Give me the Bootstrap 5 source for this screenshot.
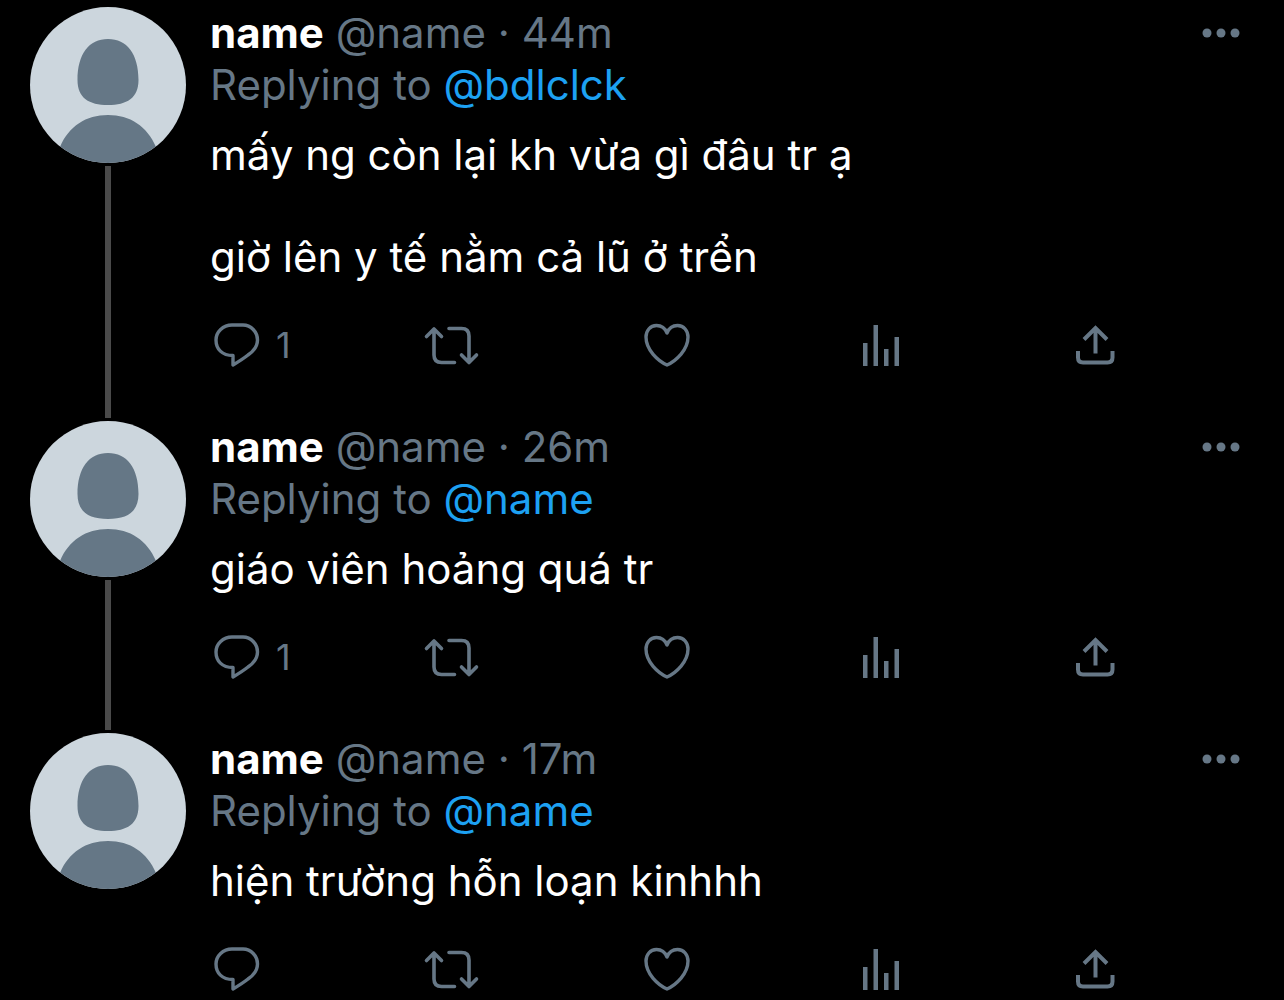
<!DOCTYPE html>
<html lang="vi">
<head>
<meta charset="utf-8">
<meta name="viewport" content="width=device-width, initial-scale=1">
<title>Thread</title>
<link href="https://cdn.jsdelivr.net/npm/bootstrap@5.3.0/dist/css/bootstrap.min.css" rel="stylesheet">
<style>
  body { background: #000; color: #fff; font-family: Inter, "Noto Sans", sans-serif; font-size: 42px; }
  .thread { padding: 4px 0 0 30px; }
  .tweet { gap: 24px; }
  .rail { width: 156px; padding-top: 3px; gap: 3px; }
  .rail-line { width: 6px; background: #4a4a4a; }
  .avatar { width: 156px; height: 156px; background: #ccd6dd; }
  .tweet-main { min-width: 0; padding: 3px 0 49px; }
  .tweet:last-child .tweet-main { padding-bottom: 0; }
  .tweet-head { line-height: 52px; padding-right: 44px; }
  .dim { color: #667786; }
  .mention { color: #1da1f2; }
  .tweet-text { line-height: 51px; margin: 18px 0 39px; white-space: pre-line; }
  .act { color: #667786; gap: 12px; font-size: 36px; line-height: 48px; }
  .act svg { width: 54px; height: 48px; overflow: visible; }
  .more { color: #667786; line-height: 0; }
  .more svg { width: 38px; height: 12px; }
  .ln { fill: none; stroke: currentColor; stroke-linecap: round; stroke-linejoin: round; }
</style>
<script src="https://cdn.jsdelivr.net/npm/bootstrap@5.3.0/dist/js/bootstrap.bundle.min.js"></script>
</head>
<body>
<svg class="d-none" aria-hidden="true">
  <symbol id="person" viewBox="0 0 156 156">
    <path fill="#657786" d="M78 32C97 32 108.500 47 108.500 73C108.500 91 97 98 78 98C59 98 47.500 91 47.500 73C47.500 47 59 32 78 32ZM78 108C100 108 117 119 126 140V156H30V140C39 119 56 108 78 108Z"/>
  </symbol>
  <symbol id="reply" viewBox="0 0 54 48" overflow="visible"><path class="ln" stroke-width="3.400" d="M22 4H33C41 4 47.500 11 47.500 19C47.500 25 44 30 38 34C33 38 28 41 23 44V34.500C12 34.500 6 28 6 19C6 11 13 4 22 4Z"/></symbol>
  <symbol id="retweet" viewBox="0 0 54 48" overflow="visible"><path class="ln" stroke-width="3.600" d="M1.500 15.500 9 8 16.500 15.500M9 8V34Q9 41.500 16.500 41.500H29.500M24 7.500H36.500Q44 7.500 44 15V41M36.500 34 44 41.500 51.500 34"/></symbol>
  <symbol id="heart" viewBox="0 0 54 48" overflow="visible"><path class="ln" stroke-width="3.400" d="M27 12C25 7 21 4.500 16.500 4.500C10 4.500 6 10 6 16C6 29 18 40 27 44C36 40 48 29 48 16C48 10 44 4.500 37.500 4.500C33 4.500 29 7 27 12Z"/></symbol>
  <symbol id="stats" viewBox="0 0 54 48" overflow="visible"><path fill="currentColor" d="M9 22h4.500v23H9zM19.500 4h4.500v41h-4.500zM30 28h4.500v17H30zM40.500 16H45v29h-4.500z"/></symbol>
  <symbol id="share" viewBox="0 0 54 48" overflow="visible"><path fill="none" stroke="currentColor" stroke-width="4" d="M26.500 32.500V7M15 18.500 26.500 7 38 18.500M9 30V36.500Q9 41.500 14 41.500H38.500Q43.500 41.500 43.500 36.500V30"/></symbol>
  <symbol id="dots" viewBox="0 0 38 12"><g fill="currentColor"><circle cx="5" cy="6" r="4.500"/><circle cx="19" cy="6" r="4.500"/><circle cx="33" cy="6" r="4.500"/></g></symbol>
</svg>
<main class="thread">
  <article class="tweet d-flex">
    <div class="rail d-flex flex-column align-items-center flex-shrink-0">
      <svg class="avatar rounded-circle flex-shrink-0"><use href="#person"/></svg>
      <div class="rail-line flex-grow-1"></div>
    </div>
    <div class="tweet-main flex-grow-1">
      <header class="tweet-head">
        <div class="d-flex justify-content-between align-items-center">
          <div><strong>name</strong> <span class="dim">@name · 44m</span></div>
          <button type="button" class="more btn p-0 border-0" aria-label="More"><svg><use href="#dots"/></svg></button>
        </div>
        <div class="dim">Replying to <a href="#" class="mention text-decoration-none">@bdlclck</a></div>
      </header>
      <p class="tweet-text">mấy ng còn lại kh vừa gì đâu tr ạ

giờ lên y tế nằm cả lũ ở trển</p>
      <div class="row row-cols-5 g-0">
        <div class="col"><button type="button" class="act btn p-0 border-0 d-flex" aria-label="Reply"><svg><use href="#reply"/></svg>1</button></div>
        <div class="col"><button type="button" class="act btn p-0 border-0 d-flex" aria-label="Retweet"><svg><use href="#retweet"/></svg></button></div>
        <div class="col"><button type="button" class="act btn p-0 border-0 d-flex" aria-label="Like"><svg><use href="#heart"/></svg></button></div>
        <div class="col"><button type="button" class="act btn p-0 border-0 d-flex" aria-label="Analytics"><svg><use href="#stats"/></svg></button></div>
        <div class="col"><button type="button" class="act btn p-0 border-0 d-flex" aria-label="Share"><svg><use href="#share"/></svg></button></div>
      </div>
    </div>
  </article>
  <article class="tweet d-flex">
    <div class="rail d-flex flex-column align-items-center flex-shrink-0">
      <svg class="avatar rounded-circle flex-shrink-0"><use href="#person"/></svg>
      <div class="rail-line flex-grow-1"></div>
    </div>
    <div class="tweet-main flex-grow-1">
      <header class="tweet-head">
        <div class="d-flex justify-content-between align-items-center">
          <div><strong>name</strong> <span class="dim">@name · 26m</span></div>
          <button type="button" class="more btn p-0 border-0" aria-label="More"><svg><use href="#dots"/></svg></button>
        </div>
        <div class="dim">Replying to <a href="#" class="mention text-decoration-none">@name</a></div>
      </header>
      <p class="tweet-text">giáo viên hoảng quá tr</p>
      <div class="row row-cols-5 g-0">
        <div class="col"><button type="button" class="act btn p-0 border-0 d-flex" aria-label="Reply"><svg><use href="#reply"/></svg>1</button></div>
        <div class="col"><button type="button" class="act btn p-0 border-0 d-flex" aria-label="Retweet"><svg><use href="#retweet"/></svg></button></div>
        <div class="col"><button type="button" class="act btn p-0 border-0 d-flex" aria-label="Like"><svg><use href="#heart"/></svg></button></div>
        <div class="col"><button type="button" class="act btn p-0 border-0 d-flex" aria-label="Analytics"><svg><use href="#stats"/></svg></button></div>
        <div class="col"><button type="button" class="act btn p-0 border-0 d-flex" aria-label="Share"><svg><use href="#share"/></svg></button></div>
      </div>
    </div>
  </article>
  <article class="tweet d-flex">
    <div class="rail d-flex flex-column align-items-center flex-shrink-0">
      <svg class="avatar rounded-circle flex-shrink-0"><use href="#person"/></svg>
    </div>
    <div class="tweet-main flex-grow-1">
      <header class="tweet-head">
        <div class="d-flex justify-content-between align-items-center">
          <div><strong>name</strong> <span class="dim">@name · 17m</span></div>
          <button type="button" class="more btn p-0 border-0" aria-label="More"><svg><use href="#dots"/></svg></button>
        </div>
        <div class="dim">Replying to <a href="#" class="mention text-decoration-none">@name</a></div>
      </header>
      <p class="tweet-text">hiện trường hỗn loạn kinhhh</p>
      <div class="row row-cols-5 g-0">
        <div class="col"><button type="button" class="act btn p-0 border-0 d-flex" aria-label="Reply"><svg><use href="#reply"/></svg></button></div>
        <div class="col"><button type="button" class="act btn p-0 border-0 d-flex" aria-label="Retweet"><svg><use href="#retweet"/></svg></button></div>
        <div class="col"><button type="button" class="act btn p-0 border-0 d-flex" aria-label="Like"><svg><use href="#heart"/></svg></button></div>
        <div class="col"><button type="button" class="act btn p-0 border-0 d-flex" aria-label="Analytics"><svg><use href="#stats"/></svg></button></div>
        <div class="col"><button type="button" class="act btn p-0 border-0 d-flex" aria-label="Share"><svg><use href="#share"/></svg></button></div>
      </div>
    </div>
  </article>
</main>
</body>
</html>
